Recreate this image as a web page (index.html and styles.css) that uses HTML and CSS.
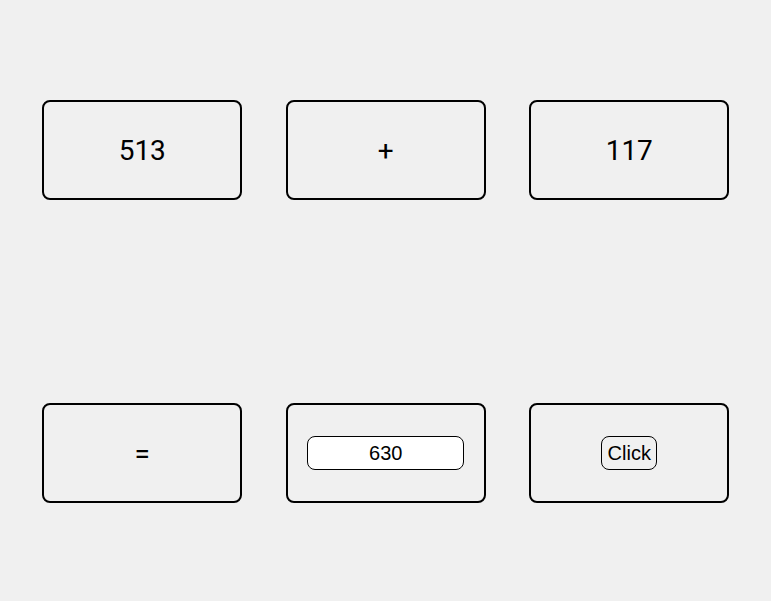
FILE: index.html
```html
<!DOCTYPE html>
<html>
<head>
<meta charset="utf-8">
<link rel="stylesheet" href="styles.css">
</head>
<body>
<div class="page">
  <div class="row">
    <div class="cell"><span class="num">513</span></div>
    <div class="cell"><span class="num">+</span></div>
    <div class="cell"><span class="num">117</span></div>
  </div>
  <div class="row">
    <div class="cell"><span class="num">=</span></div>
    <div class="cell"><input class="answer" type="text" value="630"></div>
    <div class="cell"><button class="btn">Click</button></div>
  </div>
</div>
</body>
</html>
```
FILE: styles.css
```css
html, body {
  margin: 0;
  padding: 0;
  background: #f0f0f0;
}
body {
  width: 771px;
  height: 601px;
  overflow: hidden;
}
.page {
  display: flex;
  flex-direction: column;
  gap: 203px;
  padding-top: 100px;
}
.row {
  display: flex;
  gap: 43.5px;
  padding-left: 42.25px;
}
.cell {
  width: 200px;
  height: 100px;
  box-sizing: border-box;
  border: 2px solid #000;
  border-radius: 8px;
  display: flex;
  align-items: center;
  justify-content: center;
}
.num {
  font-family: Roboto, sans-serif;
  font-size: 28px;
  color: #000;
}
.answer {
  width: 157px;
  height: 34px;
  box-sizing: border-box;
  border: 1px solid #000;
  border-radius: 8px;
  background: #fff;
  font-family: "Liberation Sans", Arial, sans-serif;
  font-size: 20px;
  text-align: center;
  color: #000;
  padding: 0;
  outline: none;
}
.btn {
  font-family: "Liberation Sans", Arial, sans-serif;
  font-size: 20px;
  color: #000;
  background: #f0f0f0;
  border: 1px solid #000;
  border-radius: 8px;
  padding: 4px 5.5px;
  height: 34px;
  box-sizing: border-box;
  line-height: 1.1;
}
```
